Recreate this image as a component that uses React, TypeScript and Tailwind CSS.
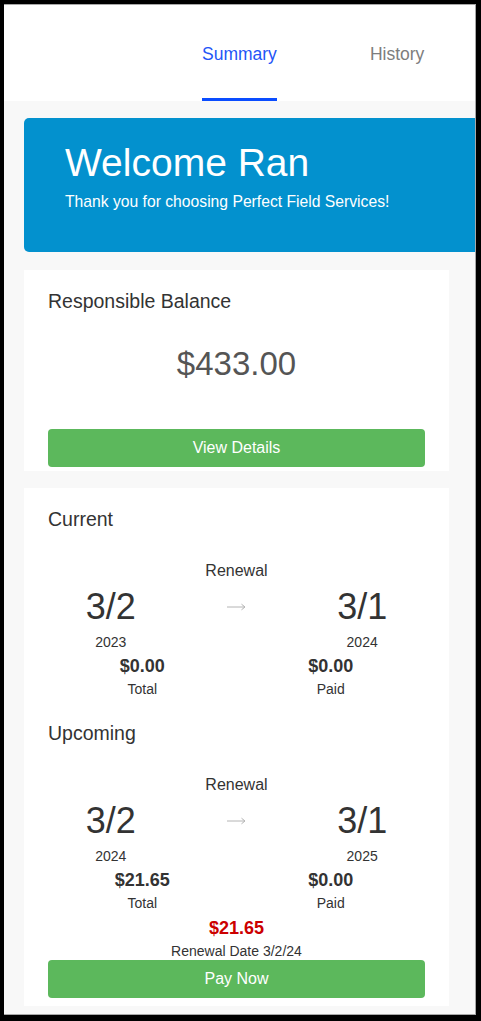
import React from "react";

function Arrow() {
  return (
    <svg width="19" height="8" viewBox="0 0 19 8" fill="none">
      <line x1="0" y1="4" x2="17.5" y2="4" stroke="#b4b4b4" strokeWidth="1" />
      <path d="M14.5 1.2 L18 4 L14.5 6.8" stroke="#b4b4b4" strokeWidth="1" fill="none" />
    </svg>
  );
}

function Section({
  title,
  fromDate,
  fromYear,
  toDate,
  toYear,
  total,
  paid,
}: {
  title: string;
  fromDate: string;
  fromYear: string;
  toDate: string;
  toYear: string;
  total: string;
  paid: string;
}) {
  return (
    <div className="flex flex-col">
      <div className="text-[19.5px] leading-[26px] text-[#333]">{title}</div>
      <div className="mt-[28px] text-center text-[16px] leading-[22px] text-[#333]">Renewal</div>
      <div className="mt-[5px] grid grid-cols-3">
        <div className="flex flex-col items-center">
          <div className="text-[36px] leading-[40px] text-[#333]">{fromDate}</div>
          <div className="mt-[5px] text-[14px] leading-[20px] text-[#333]">{fromYear}</div>
        </div>
        <div className="flex h-[40px] items-center justify-center">
          <Arrow />
        </div>
        <div className="flex flex-col items-center">
          <div className="text-[36px] leading-[40px] text-[#333]">{toDate}</div>
          <div className="mt-[5px] text-[14px] leading-[20px] text-[#333]">{toYear}</div>
        </div>
      </div>
      <div className="mt-[3px] grid grid-cols-2">
        <div className="flex flex-col items-center">
          <div className="text-[18px] font-bold leading-[22px] text-[#333]">{total}</div>
          <div className="mt-[2px] text-[14px] leading-[20px] text-[#333]">Total</div>
        </div>
        <div className="flex flex-col items-center">
          <div className="text-[18px] font-bold leading-[22px] text-[#333]">{paid}</div>
          <div className="mt-[2px] text-[14px] leading-[20px] text-[#333]">Paid</div>
        </div>
      </div>
    </div>
  );
}

export default function App() {
  return (
    <div
      className="h-[1021px] w-[481px] bg-black pl-[4px] pt-[4px]"
      style={{ fontFamily: '"Liberation Sans", Arial, sans-serif' }}
    >
      <div className="flex h-[1011px] w-[472px] flex-col overflow-hidden border-b border-r border-t border-[#a8a8a8] bg-[#f8f8f8]">
        {/* Header tabs */}
        <div className="flex h-[96px] shrink-0 bg-white pl-[198px]">
          <div className="flex flex-col border-b-[3px] border-[#0a4cff] pt-[37px]">
            <span className="text-[17.5px] leading-[24px] text-[#1f55f7]">Summary</span>
          </div>
          <div className="ml-[93px] flex flex-col pt-[37px]">
            <span className="text-[17.5px] leading-[24px] text-[#7d7d7d]">History</span>
          </div>
        </div>

        {/* Welcome banner */}
        <div className="ml-[20px] mt-[17px] flex h-[134px] shrink-0 flex-col rounded-l-[5px] bg-[#0391ce] pl-[41px] pt-[23px] text-white">
          <div className="text-[39px] leading-[43px]">Welcome Ran</div>
          <div className="mt-[8px] text-[15.7px] leading-[20px]">
            Thank you for choosing Perfect Field Services!
          </div>
        </div>

        {/* Balance card */}
        <div className="ml-[20px] mt-[18px] flex w-[425px] shrink-0 flex-col bg-white px-[24px] pb-[4px] pt-[18px]">
          <div className="text-[19.5px] leading-[26px] text-[#333]">Responsible Balance</div>
          <div className="mt-[30px] text-center text-[33px] leading-[40px] text-[#555]">$433.00</div>
          <button className="mt-[45px] flex h-[38px] w-full items-center justify-center rounded-[4px] bg-[#5cb85c] text-[16px] text-white">
            View Details
          </button>
        </div>

        {/* Renewal card */}
        <div className="ml-[20px] mt-[17px] flex w-[425px] shrink-0 flex-col bg-white px-[24px] pb-[8px] pt-[18px]">
          <Section
            title="Current"
            fromDate="3/2"
            fromYear="2023"
            toDate="3/1"
            toYear="2024"
            total="$0.00"
            paid="$0.00"
          />
          <div className="mt-[21px]">
            <Section
              title="Upcoming"
              fromDate="3/2"
              fromYear="2024"
              toDate="3/1"
              toYear="2025"
              total="$21.65"
              paid="$0.00"
            />
          </div>
          <div className="mt-[4px] text-center text-[18px] font-bold leading-[22px] text-[#cc0000]">$21.65</div>
          <div className="mt-[2px] text-center text-[14px] leading-[20px] text-[#333]">Renewal Date 3/2/24</div>
          <button className="mt-[-1px] flex h-[38px] w-full items-center justify-center rounded-[4px] bg-[#5cb85c] text-[16px] text-white">
            Pay Now
          </button>
        </div>
      </div>
    </div>
  );
}
